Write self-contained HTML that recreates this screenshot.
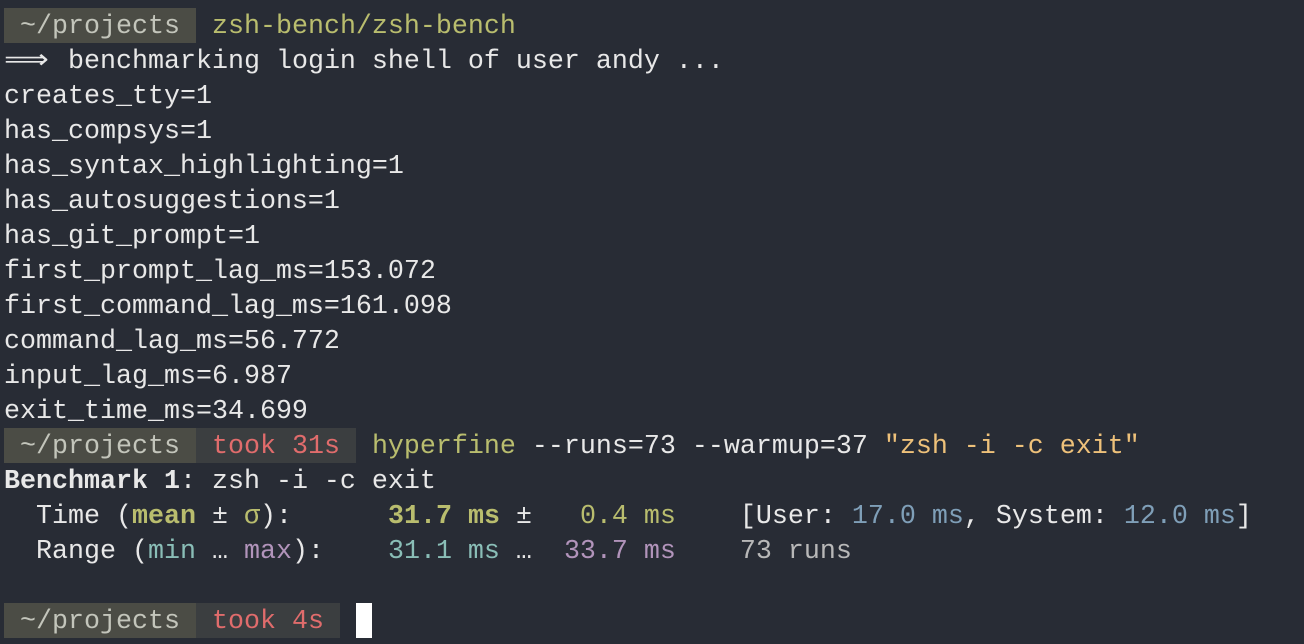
<!DOCTYPE html>
<html><head><meta charset="utf-8"><style>
html,body{margin:0;padding:0;background:#282c35;width:1304px;height:644px;overflow:hidden}
.t{position:absolute;left:4px;top:8px;font-family:"Liberation Mono","DejaVu Sans Mono",monospace;font-size:26.67px;line-height:35px;color:#e8e8e8}
.l{height:35px;white-space:pre}
.d,.k{display:inline-block;height:35px;vertical-align:top}
.d{background:#4b4c45;color:#c3c5bb}
.k{background:#3b3e40;color:#e06c6c}
.x{position:relative;top:2px}
.y{color:#b9bd6e}.o{color:#eec17a}.c{color:#8abeb7}.p{color:#b294bb}.b{color:#7f9fb8}.g{color:#b8b8b8}
.ar{display:inline-block;width:48px;transform:scaleX(1.18);transform-origin:left;vertical-align:top}
.cur{display:inline-block;width:16px;height:35px;background:#fff;vertical-align:top}
</style></head><body><div class="t"><div class="l"><span class="d"><span class="x"> ~/projects </span></span> <span class="y x">zsh-bench/zsh-bench</span></div><div class="l x"><span class="ar">⟹</span> benchmarking login shell of user andy ...</div><div class="l x">creates_tty=1</div><div class="l x">has_compsys=1</div><div class="l x">has_syntax_highlighting=1</div><div class="l x">has_autosuggestions=1</div><div class="l x">has_git_prompt=1</div><div class="l x">first_prompt_lag_ms=153.072</div><div class="l x">first_command_lag_ms=161.098</div><div class="l x">command_lag_ms=56.772</div><div class="l x">input_lag_ms=6.987</div><div class="l x">exit_time_ms=34.699</div><div class="l"><span class="d"><span class="x"> ~/projects </span></span><span class="k"><span class="x"> took 31s </span></span><span class="x"> <span class="y">hyperfine</span> --runs=73 --warmup=37 <span class="o">"zsh -i -c exit"</span></span></div><div class="l x"><b>Benchmark 1</b>: zsh -i -c exit</div><div class="l x">  Time (<b class="y">mean</b> ± <span class="y">σ</span>):      <b class="y">31.7 ms</b> ±   <span class="y">0.4 ms</span>    [User: <span class="b">17.0 ms</span>, System: <span class="b">12.0 ms</span>]</div><div class="l x">  Range (<span class="c">min</span> … <span class="p">max</span>):    <span class="c">31.1 ms</span> …  <span class="p">33.7 ms</span>    <span class="g">73 runs</span></div><div class="l"> </div><div class="l"><span class="d"><span class="x"> ~/projects </span></span><span class="k"><span class="x"> took 4s </span></span> <span class="cur"></span></div></div></body></html>
